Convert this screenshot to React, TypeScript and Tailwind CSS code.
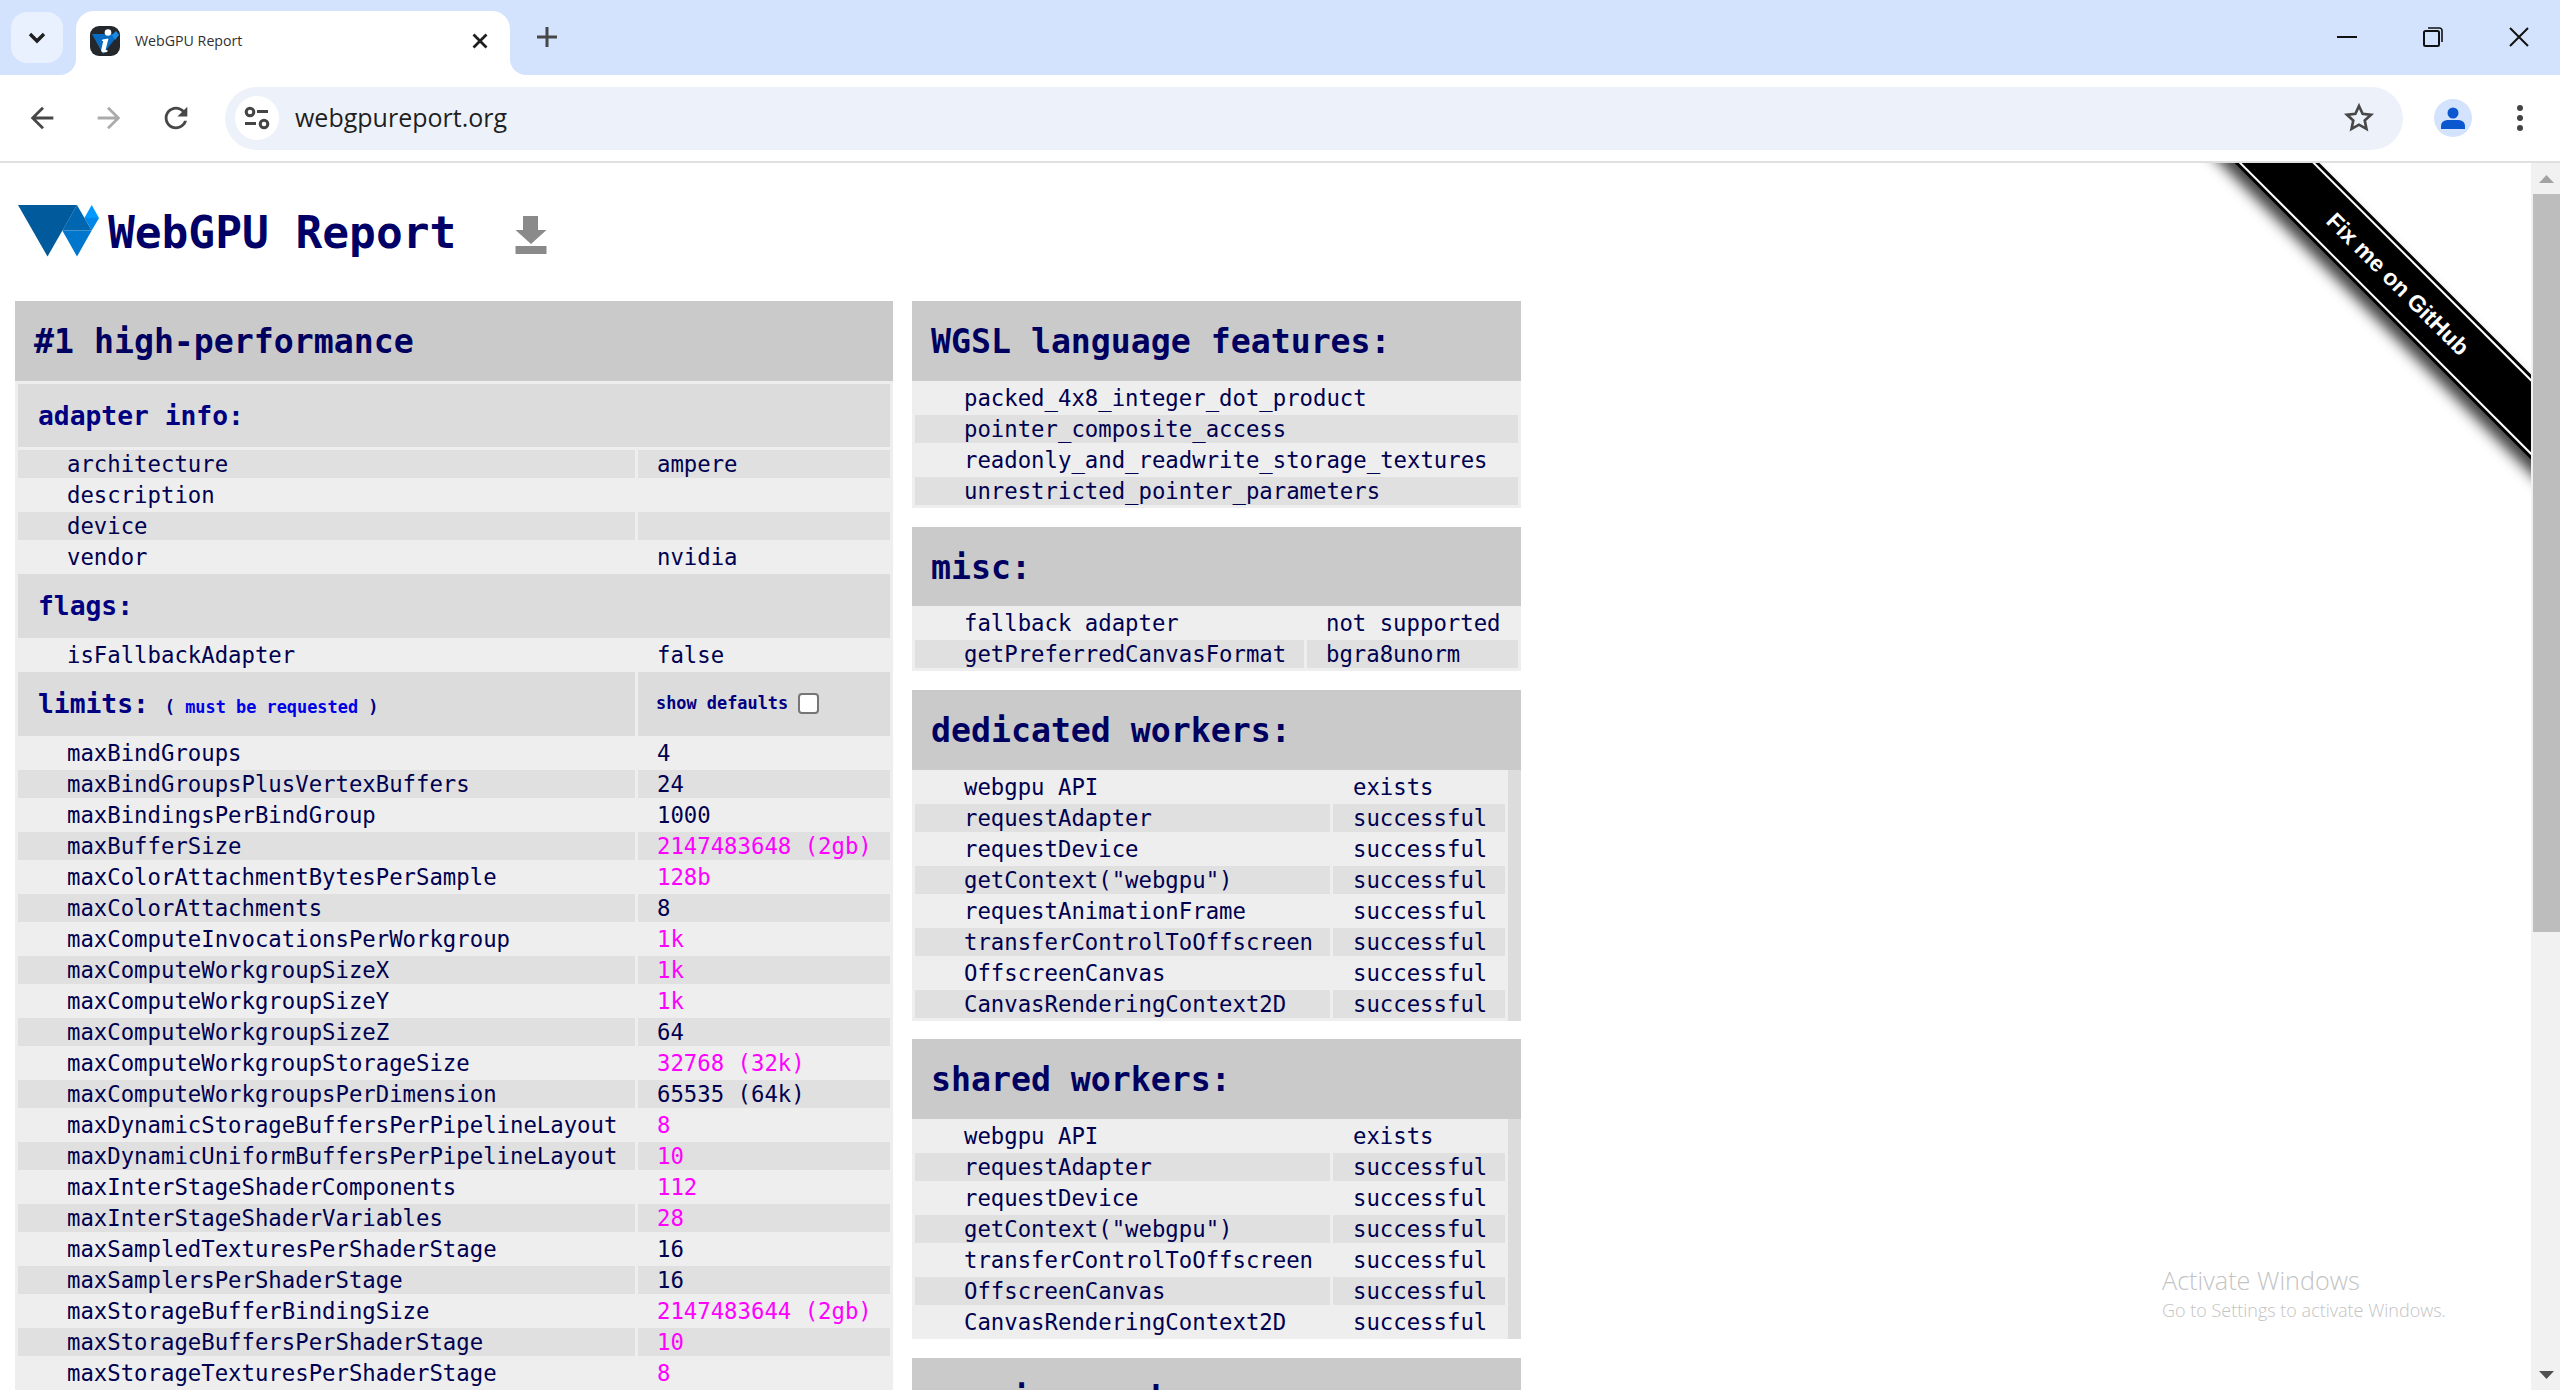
import React from "react";

const limits: [string, string, boolean][] = [
  ["maxBindGroups", "4", false],
  ["maxBindGroupsPlusVertexBuffers", "24", false],
  ["maxBindingsPerBindGroup", "1000", false],
  ["maxBufferSize", "2147483648 (2gb)", true],
  ["maxColorAttachmentBytesPerSample", "128b", true],
  ["maxColorAttachments", "8", false],
  ["maxComputeInvocationsPerWorkgroup", "1k", true],
  ["maxComputeWorkgroupSizeX", "1k", true],
  ["maxComputeWorkgroupSizeY", "1k", true],
  ["maxComputeWorkgroupSizeZ", "64", false],
  ["maxComputeWorkgroupStorageSize", "32768 (32k)", true],
  ["maxComputeWorkgroupsPerDimension", "65535 (64k)", false],
  ["maxDynamicStorageBuffersPerPipelineLayout", "8", true],
  ["maxDynamicUniformBuffersPerPipelineLayout", "10", true],
  ["maxInterStageShaderComponents", "112", true],
  ["maxInterStageShaderVariables", "28", true],
  ["maxSampledTexturesPerShaderStage", "16", false],
  ["maxSamplersPerShaderStage", "16", false],
  ["maxStorageBufferBindingSize", "2147483644 (2gb)", true],
  ["maxStorageBuffersPerShaderStage", "10", true],
  ["maxStorageTexturesPerShaderStage", "8", true],
];

const dedicated = ["webgpu API", "requestAdapter", "requestDevice", 'getContext("webgpu")', "requestAnimationFrame", "transferControlToOffscreen", "OffscreenCanvas", "CanvasRenderingContext2D"];
const shared = ["webgpu API", "requestAdapter", "requestDevice", 'getContext("webgpu")', "transferControlToOffscreen", "OffscreenCanvas", "CanvasRenderingContext2D"];
const wgsl = ["packed_4x8_integer_dot_product", "pointer_composite_access", "readonly_and_readwrite_storage_textures", "unrestricted_pointer_parameters"];

function Row({ name, value, dark, pink, valuePad = "pl-[19px]" }: { name: string; value?: string; dark: boolean; pink?: boolean; valuePad?: string }) {
  const bg = dark ? "bg-[#e0e0e0]" : "";
  return (
    <tr>
      <td className={`h-[28px] p-0 pl-[49px] leading-[28px] whitespace-nowrap ${bg}`}>{name}</td>
      {value !== undefined && (
        <td className={`h-[28px] p-0 ${valuePad} leading-[28px] whitespace-nowrap ${bg} ${pink ? "text-[#ff00ff]" : ""}`}>{value}</td>
      )}
    </tr>
  );
}

function Heading({ children, h = "h-[80px]" }: { children: React.ReactNode; h?: string }) {
  return (
    <div className={`${h} bg-[#cacaca] pl-[19px] pt-[2px] flex items-center text-[33.2px] font-bold text-[#000060] whitespace-nowrap`}>{children}</div>
  );
}

function Sub({ children }: { children: React.ReactNode }) {
  return <span className="text-[26.3px] font-bold text-[#000080]">{children}</span>;
}

function Workers({ title, rows }: { title: string; rows: string[] }) {
  return (
    <section>
      <Heading>{title}</Heading>
      <div className="flex bg-[#eeeeee]">
        <table className="w-[596px] table-fixed border-separate border-spacing-[3px]">
          <colgroup>
            <col className="w-[415px]" />
            <col />
          </colgroup>
          <tbody>
            {rows.map((r, i) => (
              <Row key={r} name={r} value={i === 0 ? "exists" : "successful"} dark={i % 2 === 1} valuePad="pl-[20px]" />
            ))}
          </tbody>
        </table>
        <div className="w-[13px] bg-[#dcdcdc]" />
      </div>
    </section>
  );
}

function Logo() {
  return (
    <svg width="93" height="60" viewBox="15 203 93 60" className="shrink-0">
      <polygon points="18,206 77,206 47.5,257.5" fill="#005a9c" />
      <polygon points="77,206 91.7,231.5 62.3,231.5" fill="#0066b0" />
      <polygon points="62.3,231.5 91.7,231.5 77,257.5" fill="#0076cc" />
      <polygon points="91.7,206 99,219 84.4,219" fill="#0099ff" />
      <polygon points="84.4,219 99,219 91.7,231.5" fill="#0086e6" />
    </svg>
  );
}

function Chrome() {
  return (
    <>
      <div className="h-[75px] bg-[#d3e3fd] flex items-start shrink-0">
        <div className="ml-[11px] mt-[12px] w-[52px] h-[51px] rounded-[16px] bg-[#e9f0fe] flex items-center justify-center">
          <svg width="18" height="12" viewBox="0 0 18 12"><path d="M2 2l7 7 7-7" fill="none" stroke="#1f1f1f" strokeWidth="3.4" /></svg>
        </div>
        <div className="relative ml-[13px] mt-[11px] w-[434px] h-[64px] bg-white rounded-t-[18px] flex items-center">
          <div className="absolute -left-[16px] bottom-0 w-[16px] h-[16px] bg-white">
            <div className="w-full h-full bg-[#d3e3fd] rounded-br-[16px]" />
          </div>
          <div className="absolute -right-[16px] bottom-0 w-[16px] h-[16px] bg-white">
            <div className="w-full h-full bg-[#d3e3fd] rounded-bl-[16px]" />
          </div>
          <svg width="30" height="30" viewBox="0 0 30 30" className="ml-[14px] -mt-[4px] shrink-0">
            <rect width="30" height="30" rx="9" fill="#24282c" />
            <polygon points="2,8 29,8 13,28" fill="#0a6cc0" />
            <polygon points="26,5 29,9 25,14 22,9" fill="#1a8be8" />
            <circle cx="18" cy="6.500" r="3.300" fill="#ffffff" />
            <path d="M12.500 13.500l6-1-2.800 11q0 1 2 .5l-.5 2q-6.500 1.500-6-2l2-9h-1.400z" fill="#ffffff" />
          </svg>
          <span className="ml-[15px] -mt-[4px] text-[14.200px] text-[#303030] font-['Open_Sans',sans-serif] whitespace-nowrap">WebGPU Report</span>
          <svg width="16" height="16" viewBox="0 0 16 16" className="ml-auto mr-[22px] -mt-[4px]"><path d="M1.500 1.500l13 13M14.500 1.500l-13 13" stroke="#1f1f1f" strokeWidth="2.800" /></svg>
        </div>
        <svg width="20" height="20" viewBox="0 0 20 20" className="ml-[27px] mt-[27px]"><path d="M10 0v20M0 10h20" stroke="#474747" strokeWidth="3" /></svg>
        <div className="ml-auto flex items-center mt-[27px]">
          <svg width="20" height="20" viewBox="0 0 20 20"><path d="M0 10h20" stroke="#111" strokeWidth="2" /></svg>
          <svg width="20" height="20" viewBox="0 0 20 20" className="ml-[66px]">
            <rect x="1" y="4" width="15" height="15" rx="1.500" fill="none" stroke="#111" strokeWidth="2" />
            <path d="M5 1h11.500a2.500 2.500 0 0 1 2.500 2.500V15" fill="none" stroke="#111" strokeWidth="1.600" />
          </svg>
          <svg width="20" height="20" viewBox="0 0 20 20" className="ml-[66px] mr-[31px]"><path d="M1 1l18 18M19 1L1 19" stroke="#111" strokeWidth="2" /></svg>
        </div>
      </div>
      <div className="h-[88px] bg-white border-b-2 border-[#e0e0e0] shrink-0 flex items-center rounded-t-[14px] relative">
        <svg width="34" height="34" viewBox="0 0 24 24" className="ml-[25px]"><path d="M20 11H7.830l5.590-5.590L12 4l-8 8 8 8 1.410-1.410L7.830 13H20v-2z" fill="#474747" /></svg>
        <svg width="34" height="34" viewBox="0 0 24 24" className="ml-[33px]"><path d="M4 11h12.170l-5.590-5.590L12 4l8 8-8 8-1.410-1.410L16.170 13H4v-2z" fill="#ababab" /></svg>
        <svg width="34" height="34" viewBox="0 0 24 24" className="ml-[33px]"><path d="M17.650 6.350C16.200 4.900 14.210 4 12 4c-4.420 0-7.990 3.580-7.990 8s3.570 8 7.990 8c3.730 0 6.840-2.550 7.730-6h-2.080c-.82 2.330-3.040 4-5.650 4-3.310 0-6-2.690-6-6s2.690-6 6-6c1.660 0 3.140.69 4.220 1.780L13 11h7V4l-2.350 2.350z" fill="#474747" /></svg>
        <div className="ml-[32px] w-[2178px] h-[63px] rounded-full bg-[#edf2fa] flex items-center">
          <div className="ml-[10px] w-[44px] h-[44px] rounded-full bg-white flex items-center justify-center shrink-0">
            <svg width="26" height="24" viewBox="0 0 26 24" fill="none" stroke="#444" strokeWidth="3">
              <circle cx="6" cy="6" r="3.800" /><path d="M13 5.500h11" /><path d="M1 17.500h11" /><circle cx="20" cy="18" r="3.800" />
            </svg>
          </div>
          <span className="ml-[16px] text-[25px] text-[#1f1f1f] font-['Open_Sans',sans-serif] whitespace-nowrap">webgpureport.org</span>
          <svg width="32" height="32" viewBox="0 0 24 24" className="ml-auto mr-[28px]" fill="none" stroke="#474747" strokeWidth="2">
            <path d="M12 3l2.700 5.900 6.300.7-4.700 4.300 1.300 6.300L12 17l-5.600 3.200 1.300-6.300L3 9.600l6.300-.7z" />
          </svg>
        </div>
        <div className="ml-[31px] w-[38px] h-[38px] rounded-full bg-[#d3e3fd] flex items-center justify-center shrink-0">
          <svg width="24" height="24" viewBox="0 0 24 24" fill="#0b57d0"><circle cx="12" cy="7" r="5.500" /><path d="M0 23v-3q0-5 6-6h12q6 1 6 6v3z" /></svg>
        </div>
        <svg width="8" height="28" viewBox="0 0 8 28" className="ml-[44px]" fill="#444"><circle cx="4" cy="4" r="3" /><circle cx="4" cy="14" r="3" /><circle cx="4" cy="24" r="3" /></svg>
      </div>
    </>
  );
}

export default function App() {
  return (
    <div className="relative w-[2560px] h-[1390px] overflow-hidden flex flex-col bg-white">
      <Chrome />
      <div className="flex flex-1 min-h-0">
        <main className="relative flex-1 min-w-0 overflow-hidden font-['DejaVu_Sans_Mono',monospace] text-[22.3px] text-[#000050]">
          <div className="h-[138px] flex items-center pl-[15px]">
            <Logo />
            <h1 className="pt-[3px] text-[44.5px] font-bold text-[#000066] whitespace-nowrap">WebGPU Report</h1>
            <svg width="32" height="38" viewBox="0 0 32 38" className="ml-[59px] mt-[6px]" fill="#8a8a8a">
              <path d="M8 0h15v14h8.500L16 28 .5 14H8z" /><rect x="0.500" y="30" width="31" height="8" />
            </svg>
          </div>
          <div className="flex items-start pl-[15px] gap-[19px]">
            <section className="w-[878px]">
              <Heading>#1 high-performance</Heading>
              <table className="w-full table-fixed border-separate border-spacing-[3px] bg-[#eeeeee]">
                <colgroup>
                  <col className="w-[617px]" />
                  <col />
                </colgroup>
                <tbody>
                  <tr><td colSpan={2} className="h-[63px] p-0 pl-[20px] pt-[2px] bg-[#dcdcdc]"><Sub>adapter info:</Sub></td></tr>
                  <Row name="architecture" value="ampere" dark />
                  <Row name="description" value="" dark={false} />
                  <Row name="device" value="" dark />
                  <Row name="vendor" value="nvidia" dark={false} />
                  <tr><td colSpan={2} className="h-[64px] p-0 pl-[20px] pt-[2px] bg-[#dcdcdc]"><Sub>flags:</Sub></td></tr>
                  <Row name="isFallbackAdapter" value="false" dark={false} />
                  <tr>
                    <td className="h-[64px] p-0 pl-[20px] pt-[2px] bg-[#dcdcdc] whitespace-nowrap">
                      <Sub>limits:</Sub>
                      <span className="ml-[16px] text-[16.9px] font-bold text-[#000080]">( <span className="text-[#0000e6]">must be requested</span> )</span>
                    </td>
                    <td className="h-[64px] p-0 pl-[18px] bg-[#dcdcdc]">
                      <div className="flex items-center">
                        <span className="text-[16.9px] font-bold text-[#000080] whitespace-nowrap">show defaults</span>
                        <input type="checkbox" className="ml-[10px] w-[21px] h-[21px] appearance-none bg-white border-2 border-[#767676] rounded-[4px]" />
                      </div>
                    </td>
                  </tr>
                  {limits.map(([n, v, p], i) => (
                    <Row key={n} name={n} value={v} pink={p} dark={i % 2 === 1} />
                  ))}
                </tbody>
              </table>
            </section>
            <div className="w-[609px] shrink-0">
              <section>
                <Heading>WGSL language features:</Heading>
                <table className="w-full table-fixed border-separate border-spacing-[3px] bg-[#eeeeee]">
                  <tbody>
                    {wgsl.map((r, i) => (
                      <Row key={r} name={r} dark={i % 2 === 1} />
                    ))}
                  </tbody>
                </table>
              </section>
              <section className="mt-[19px]">
                <Heading h="h-[79px]">misc:</Heading>
                <table className="w-full table-fixed border-separate border-spacing-[3px] bg-[#eeeeee]">
                  <colgroup>
                    <col className="w-[389px]" />
                    <col />
                  </colgroup>
                  <tbody>
                    <Row name="fallback adapter" value="not supported" dark={false} />
                    <Row name="getPreferredCanvasFormat" value="bgra8unorm" dark />
                  </tbody>
                </table>
              </section>
              <div className="mt-[19px]"><Workers title="dedicated workers:" rows={dedicated} /></div>
              <div className="mt-[18px]"><Workers title="shared workers:" rows={shared} /></div>
              <div className="mt-[19px]"><Heading>service workers:</Heading></div>
            </div>
          </div>
          <div className="absolute left-[1898px] top-[91px] w-[1000px] h-[60px] rotate-45 bg-black py-[3px] shadow-[0_10px_14px_rgba(0,0,0,0.75)]">
            <div className="h-full border-y-2 border-white flex items-center justify-center text-white font-bold text-[23px] font-['Liberation_Sans',sans-serif]">Fix me on GitHub</div>
          </div>
        </main>
        <aside className="relative w-[29px] shrink-0 bg-[#f1f1f1] flex flex-col items-center">
          <div className="h-[31px] flex items-center justify-center pl-[2px]">
            <svg width="15" height="8" viewBox="0 0 15 8"><polygon points="7.500,0 15,8 0,8" fill="#a3a3a3" /></svg>
          </div>
          <div className="ml-[2px] w-[27px] h-[738px] bg-[#bdbdbd]" />
          <div className="mt-auto h-[31px] flex items-center justify-center pl-[2px]">
            <svg width="15" height="8" viewBox="0 0 15 8"><polygon points="0,0 15,0 7.500,8" fill="#505050" /></svg>
          </div>
        </aside>
      </div>
      <div className="absolute left-[2162px] top-[1262px] text-[#c4c4c4] font-['Open_Sans',sans-serif] font-light whitespace-nowrap pointer-events-none">
        <div className="text-[25.2px] leading-[36px]">Activate Windows</div>
        <div className="text-[18px] leading-[24px]">Go to Settings to activate Windows.</div>
      </div>
    </div>
  );
}
